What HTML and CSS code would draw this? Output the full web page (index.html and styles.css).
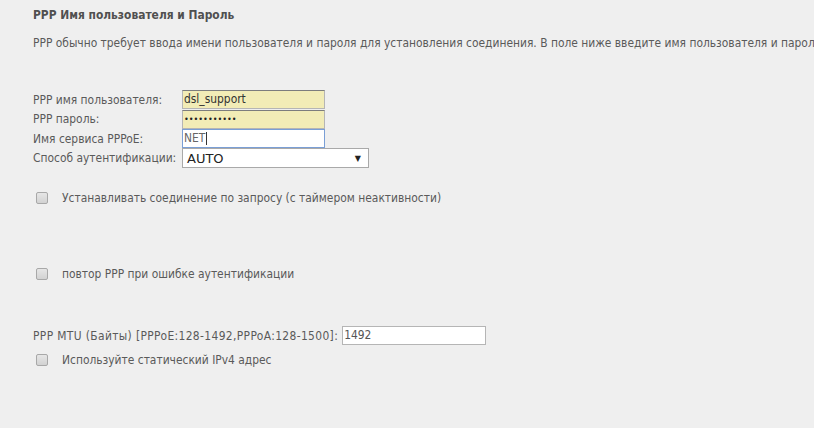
FILE: index.html
```html
<!DOCTYPE html>
<html>
<head>
<meta charset="utf-8">
<link rel="stylesheet" href="styles.css">
</head>
<body>
<div class="page">
  <div class="title">PPP Имя пользователя и Пароль</div>
  <div class="desc">PPP обычно требует ввода имени пользователя и пароля для установления соединения. В поле ниже введите имя пользователя и пароль</div>

  <div class="form">
    <div class="row">
      <span class="lbl">PPP имя пользователя:</span>
      <span class="field autofill">dsl_support</span>
    </div>
    <div class="row">
      <span class="lbl">PPP пароль:</span>
      <span class="field autofill dots">•••••••••••</span>
    </div>
    <div class="row">
      <span class="lbl">Имя сервиса PPPoE:</span>
      <span class="field focus">NET<span class="caret"></span></span>
    </div>
    <div class="row">
      <span class="lbl">Способ аутентификации:</span>
      <span class="select"><span>AUTO</span><span class="arrow">▼</span></span>
    </div>
  </div>

  <div class="check c1"><span class="box"></span><span>Устанавливать соединение по запросу (с таймером неактивности)</span></div>

  <div class="check c2"><span class="box"></span><span>повтор PPP при ошибке аутентификации</span></div>

  <div class="mtu">
    <span class="mtu-lbl">PPP MTU (Байты) [PPPoE:128-1492,PPPoA:128-1500]:</span>
    <span class="field plain">1492</span>
  </div>

  <div class="check c3"><span class="box"></span><span>Используйте статический IPv4 адрес</span></div>
</div>
</body>
</html>
```

FILE: styles.css
```css
html, body {
  margin: 0;
  padding: 0;
  background: #efefef;
}
.page {
  padding: 8px 0 0 33px;
  font-family: "DejaVu Sans Condensed", "DejaVu Sans", sans-serif;
  font-size: 11.9px;
  color: #5a5a5a;
  overflow: hidden;
  width: 781px;
}
.title {
  font-weight: bold;
  color: #505050;
  height: 14px;
  line-height: 14px;
}
.desc {
  margin-top: 14px;
  white-space: nowrap;
  line-height: 14px;
}
.form {
  margin-top: 40px;
  display: flex;
  flex-direction: column;
}
.row {
  display: flex;
  align-items: center;
  height: 19.5px;
}
.lbl {
  width: 149px;
  flex: none;
}
.field {
  box-sizing: border-box;
  width: 143px;
  height: 19px;
  border: 1px solid #b5b5b5;
  border-top-color: #7d7d7d;
  background: #fff;
  padding: 0 1px;
  line-height: 17px;
  color: #333;
  display: flex;
  align-items: center;
}
.autofill {
  background: #f2ecb6;
}
.dots {
  font-size: 9px;
  letter-spacing: 0;
  color: #222;
}
.focus {
  border: 1px solid #7a9fd6;
  color: #666;
}
.caret {
  display: inline-block;
  width: 1px;
  height: 13px;
  background: #333;
  margin-left: 1px;
}
.select {
  box-sizing: border-box;
  width: 187px;
  height: 20px;
  border: 1px solid #a9a9a9;
  background: #fff;
  display: flex;
  align-items: center;
  justify-content: space-between;
  padding: 0 7px 0 4px;
  font-family: "DejaVu Sans", sans-serif;
  font-size: 13px;
  color: #222;
}
.arrow {
  font-size: 8px;
  color: #222;
}
.check {
  display: flex;
  align-items: center;
  height: 14px;
}
.box {
  box-sizing: border-box;
  width: 12px;
  height: 12px;
  border: 1px solid #a8a8a8;
  border-radius: 2px;
  background: linear-gradient(#e6e6e6, #d2d2d2);
  margin: 0 14px 0 3px;
}
.c1 { margin-top: 23px; }
.c2 { margin-top: 62px; }
.mtu {
  margin-top: 45px;
  display: flex;
  align-items: center;
  gap: 4px;
}
.mtu-lbl {
  letter-spacing: 0.37px;
  white-space: nowrap;
}
.mtu .field {
  width: 144px;
  height: 19px;
  border: 1px solid #b5b5b5;
  color: #555;
}
.c3 { margin-top: 8px; }
```
